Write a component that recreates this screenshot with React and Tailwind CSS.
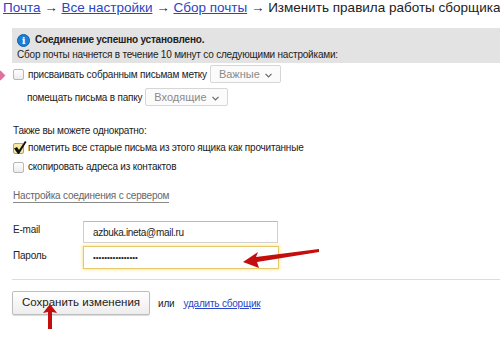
import React from "react";

const Box = ({ checked }) => (
  <span
    className={
      "relative inline-block w-[11px] h-[11px] rounded-[2px] border shrink-0 " +
      (checked ? "border-[#b9a45a] bg-[#f6e7a6]" : "border-[#b8b8b8] bg-gradient-to-b from-white to-[#ececec]")
    }
  >
    {checked && (
      <svg className="absolute left-[-1px] top-[-4px]" width="14" height="15" viewBox="0 0 14 15">
        <path d="M1 8.5 L4 7 L6 10 L12 1 L13.5 2 L6 14 L5 14 Z" fill="#111" />
      </svg>
    )}
  </span>
);

const Select = ({ label }) => (
  <span className="inline-flex items-center gap-[5px] h-[18px] px-[8px] border border-[#d6d6d6] rounded-[2px] bg-[#fbfbfb] text-[#8a8a8a] text-[11px] tracking-normal">
    {label}
    <svg width="7" height="5" viewBox="0 0 7 5" className="mt-[2px]">
      <path d="M0.5 0.8 L3.5 3.8 L6.5 0.8" stroke="#666" strokeWidth="1.2" fill="none" />
    </svg>
  </span>
);

export default function App() {
  return (
    <div className="relative w-[500px] h-[340px] overflow-hidden bg-white text-[#222] font-['Liberation_Sans',Arial,sans-serif]">
      {/* breadcrumbs */}
      <div className="h-[18px] pl-[3px] text-[13.5px] leading-[15px] whitespace-nowrap">
        <a className="text-[#2a45c6] underline">Почта</a>
        <span> → </span>
        <a className="text-[#2a45c6] underline">Все настройки</a>
        <span> → </span>
        <a className="text-[#2a45c6] underline">Сбор почты</a>
        <span> → Изменить правила работы сборщика</span>
      </div>

      {/* notice */}
      <div className="ml-[12px] mt-[10px] h-[35px] bg-[#e3e3e3] pl-[5px] pt-[5px] text-[10px] tracking-[-0.2px] leading-[14px]">
        <div className="flex items-center gap-[5px]">
          <span className="w-[13px] h-[13px] rounded-full bg-[#1c7fd6] border border-[#0d5ea8] text-white text-[10px] font-bold leading-[11px] flex items-center justify-center font-['DejaVu_Serif',serif]">
            i
          </span>
          <span className="font-bold">Соединение успешно установлено.</span>
        </div>
        <div className="mt-[1px]">Сбор почты начнется в течение 10 минут со следующими настройками:</div>
      </div>

      {/* label rows */}
      <div className="relative mt-[2px] text-[10px] tracking-[-0.2px]">
        <span className="absolute left-[-3px] top-[7px] w-[7px] h-[7px] rotate-45 bg-[#e0709e]" />
        <div className="flex items-center h-[18px] pl-[13px] gap-[4px]">
          <Box />
          <span className="mr-[-1px]">присваивать собранным письмам метку</span>
          <Select label="Важные" />
        </div>
        <div className="flex items-center h-[18px] pl-[27px] mt-[5px] gap-[3px]">
          <span>помещать письма в папку</span>
          <Select label="Входящие" />
        </div>
      </div>

      {/* once options */}
      <div className="mt-[18px] pl-[13px] text-[10px] tracking-[-0.2px] leading-[14px]">
        <div>Также вы можете однократно:</div>
        <div className="flex items-center gap-[4px] mt-[3px] h-[14px]">
          <Box checked />
          <span>пометить все старые письма из этого ящика как прочитанные</span>
        </div>
        <div className="flex items-center gap-[4px] mt-[5px] h-[14px]">
          <Box />
          <span>скопировать адреса из контактов</span>
        </div>
        <div className="mt-[15px] text-[#666]">
          <span className="border-b border-[#888] pb-[1px]">Настройка соединения с сервером</span>
        </div>
      </div>

      {/* credentials */}
      <div className="mt-[18px] pl-[13px] text-[10px] tracking-[-0.2px]">
        <div className="flex items-center h-[22px]">
          <span className="w-[70px] mt-[-5px]">E-mail</span>
          <div className="w-[195px] h-[22px] border border-[#cfcfcf] border-t-[#b9b9b9] flex items-center pl-[9px] text-[#222] text-[10px] tracking-[-0.3px]">
            azbuka.ineta@mail.ru
          </div>
        </div>
        <div className="flex items-center h-[23px] mt-[3px]">
          <span className="w-[70px] mt-[-5px]">Пароль</span>
          <div className="w-[196px] h-[23px] border border-[#e4c96a] shadow-[0_0_3px_1px_#fbe9a6] flex items-center pl-[9px] text-[#222] text-[8px] tracking-[0px]">
            ••••••••••••••••
          </div>
        </div>
      </div>

      <div className="ml-[12px] mt-[10px] border-t border-[#dcdcdc]" />

      {/* actions */}
      <div className="flex items-center pl-[12px] mt-[11px] text-[10px] tracking-[-0.2px]">
        <button className="h-[24px] w-[138px] border border-[#bdbdbd] rounded-[2px] bg-gradient-to-b from-white to-[#ededed] text-[11.5px] tracking-normal whitespace-nowrap text-[#222] shadow-[0_1px_1px_rgba(0,0,0,0.15)]">
          Сохранить изменения
        </button>
        <span className="ml-[8px]">или</span>
        <a className="ml-[9px] text-[#2a45c6] underline">удалить сборщик</a>
      </div>

      {/* red annotation arrows */}
      <svg className="absolute left-0 top-0 pointer-events-none" width="500" height="340">
        <polygon points="243,262 258,252 256,257 319,249 319,252 257,262 259,268" fill="#c40d0d" />
        <polygon points="50,304 57,313 52,312 52,329 48,329 48,312 43,313" fill="#c40d0d" />
      </svg>
    </div>
  );
}
